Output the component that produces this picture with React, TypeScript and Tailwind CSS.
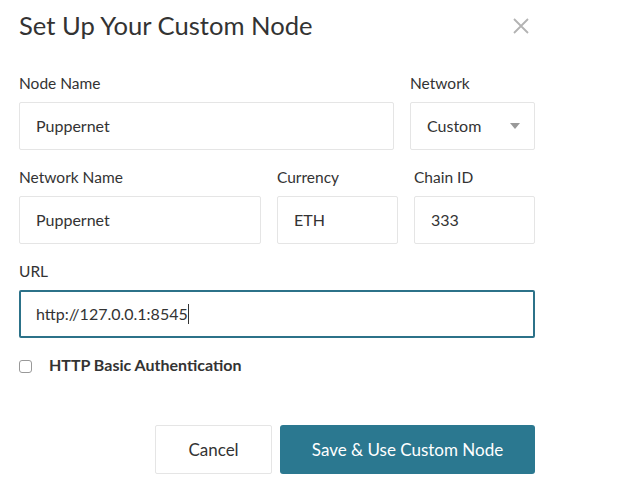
import React from 'react';

const font = { fontFamily: 'Lato, "Liberation Sans", sans-serif' };

const Field: React.FC<{ label: string; value: string; className?: string; children?: React.ReactNode }> = ({ label, value, className, children }) => (
    <div className={className}>
        <div className="h-5 leading-5 text-[15.5px] text-[#333] mb-[9px]">{label}</div>
        <div className="h-12 border border-[#e5e5e5] rounded-[2px] bg-white flex items-center pl-4 pr-4 text-[16px] text-[#333]">
            <span className="flex-1">{value}</span>
            {children}
        </div>
    </div>
);

export default function App() {
    return (
        <div className="w-[633px] h-[489px] bg-white overflow-hidden" style={font}>
            <div className="pl-[19px] w-[535px]">
                <div className="flex items-center justify-between h-[50px] pt-[1px]">
                    <h1 className="text-[25.6px] text-[#333] font-normal">Set Up Your Custom Node</h1>
                    <svg width="16" height="16" viewBox="0 0 16 16" className="mr-[6px]">
                        <path d="M1 1L15 15M15 1L1 15" stroke="#b3b3b3" strokeWidth="1.8" />
                    </svg>
                </div>

                <div className="mt-[23px] flex gap-4">
                    <Field label="Node Name" value="Puppernet" className="w-[375px]" />
                    <Field label="Network" value="Custom" className="w-[125px]">
                        <svg width="10" height="6" viewBox="0 0 10 6" className="-mr-[2px]">
                            <path d="M0 0H10L5 6Z" fill="#999" />
                        </svg>
                    </Field>
                </div>

                <div className="mt-[17px] flex gap-4">
                    <Field label="Network Name" value="Puppernet" className="w-[242px]" />
                    <Field label="Currency" value="ETH" className="w-[121px]" />
                    <Field label="Chain ID" value="333" className="w-[121px]" />
                </div>

                <div className="mt-[17px]">
                    <div className="h-5 leading-5 text-[15.5px] text-[#333] mb-[9px]">URL</div>
                    <div className="h-12 border-2 border-[#2c7289] rounded-[2px] flex items-center pl-[15px] text-[16px] text-[#333]">
                        <span>http://127.0.0.1:8545</span>
                        <span className="w-px h-[20px] bg-[#333]" />
                    </div>
                </div>

                <div className="mt-[17px] flex items-center h-5">
                    <span className="w-[13px] h-[13px] border border-[#999] rounded-[3px] bg-white mt-[3px]" />
                    <span className="ml-[17px] text-[16px] font-bold text-[#333]">HTTP Basic Authentication</span>
                </div>

                <div className="mt-[50px] flex justify-end gap-2">
                    <button className="w-[117px] h-[49px] border border-[#e5e5e5] rounded-[2px] bg-white text-[17px] text-[#333]">
                        Cancel
                    </button>
                    <button className="w-[255px] h-[49px] rounded-[3px] bg-[#2b7890] text-[17px] text-white">
                        Save &amp; Use Custom Node
                    </button>
                </div>
            </div>
        </div>
    );
}
